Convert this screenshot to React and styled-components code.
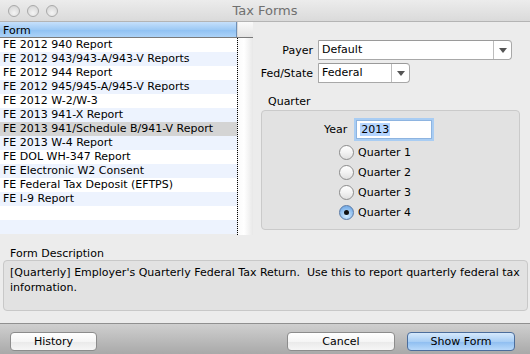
import React from "react"
import styled, { createGlobalStyle } from "styled-components"

const GlobalStyle = createGlobalStyle`
  html, body { margin: 0; padding: 0; }
  body {
    width: 530px;
    height: 354px;
    overflow: hidden;
    font-family: "DejaVu Sans", "Noto Sans", sans-serif;
    font-size: 11px;
    color: #000;
  }
`

const forms = [
  "FE 2012 940 Report",
  "FE 2012 943/943-A/943-V Reports",
  "FE 2012 944 Report",
  "FE 2012 945/945-A/945-V Reports",
  "FE 2012 W-2/W-3",
  "FE 2013 941-X Report",
  "FE 2013 941/Schedule B/941-V Report",
  "FE 2013 W-4 Report",
  "FE DOL WH-347 Report",
  "FE Electronic W2 Consent",
  "FE Federal Tax Deposit (EFTPS)",
  "FE I-9 Report",
  "",
  "",
]

const Window = styled.div`
  width: 530px;
  height: 354px;
  display: flex;
  flex-direction: column;
  background: #ececec;
`

const TitleBar = styled.div`
  height: 22px;
  flex: none;
  display: flex;
  align-items: center;
  position: relative;
  background: linear-gradient(#ececec, #dadada);
  border-bottom: 1px solid #b4b4b4;
  box-sizing: border-box;
`

const Lights = styled.div`
  display: flex;
  gap: 7px;
  padding-left: 8px;
`

const Light = styled.span`
  width: 12px;
  height: 12px;
  border-radius: 50%;
  box-sizing: border-box;
  border: 1px solid #a9a9a9;
  background: radial-gradient(circle at 50% 70%, #f4f4f4, #d0d0d0);
`

const Title = styled.div`
  position: absolute;
  left: 0;
  right: 0;
  text-align: center;
  font-size: 13px;
  color: #707070;
  pointer-events: none;
`

const Main = styled.div`
  height: 213px;
  flex: none;
  display: flex;
`

const ListPane = styled.div`
  width: 253px;
  flex: none;
  display: flex;
  flex-direction: column;
  overflow: hidden;
`

const HeaderRow = styled.div`
  height: 16px;
  flex: none;
  display: flex;
  border-bottom: 1px solid #7a7a7a;
  box-sizing: border-box;
`

const HeaderCell = styled.div`
  width: 237px;
  padding: 1px 0 0 3px;
  box-sizing: border-box;
  line-height: 15px;
  background: linear-gradient(#c6e0fb, #9ecaf5 50%, #8ec0f3 51%, #acd3f8);
  border-right: 1px solid #6e8fb6;
`

const HeaderCorner = styled.div`
  flex: 1;
  background: linear-gradient(#fafafa, #e4e4e4);
  border-left: 1px solid #d8d8d8;
`

const Body = styled.div`
  flex: 1;
  display: flex;
  overflow: hidden;
`

const Rows = styled.div`
  width: 238px;
  flex: none;
  border-right: 1px dotted #000;
  box-sizing: border-box;
`

const Row = styled.div`
  height: 14px;
  line-height: 14px;
  padding-left: 3px;
  white-space: nowrap;
  background: ${(p) => (p.$selected ? "#d4d4d4" : p.$odd ? "#edf3fe" : "#fff")};
`

const Track = styled.div`
  flex: 1;
  background: linear-gradient(90deg, #fafafa, #ffffff 40%, #e8e8e8);
`

const RightPane = styled.div`
  flex: 1;
  padding: 18px 10px 0 7px;
  display: flex;
  flex-direction: column;
`

const FieldGrid = styled.div`
  display: grid;
  grid-template-columns: 53px auto;
  column-gap: 5px;
  row-gap: 3px;
  align-items: center;
`

const Label = styled.div`
  text-align: right;
  white-space: nowrap;
`

const Select = styled.div`
  width: ${(p) => p.$w}px;
  height: 20px;
  display: flex;
  box-sizing: border-box;
  background: #fff;
  border: 1px solid #a8a8a8;
  border-top-color: #9a9a9a;
  border-radius: 0 4px 4px 0;
`

const SelectText = styled.div`
  flex: 1;
  padding-left: 3px;
  line-height: 18px;
`

const Arrow = styled.div`
  width: 17px;
  border-left: 1px solid #bdbdbd;
  display: flex;
  align-items: center;
  justify-content: center;
  &::after {
    content: "";
    border-left: 4px solid transparent;
    border-right: 4px solid transparent;
    border-top: 5px solid #555;
  }
`

const GroupTitle = styled.div`
  margin: 12px 0 0 8px;
  line-height: 13px;
`

const Group = styled.div`
  margin: 2px 0 0 1px;
  height: 120px;
  box-sizing: border-box;
  background: #e2e2e2;
  border: 1px solid #cacaca;
  border-radius: 4px;
  padding: 9px 0 0 62px;
`

const YearRow = styled.div`
  display: flex;
  align-items: center;
  gap: 9px;
  margin-bottom: 5px;
`

const YearInput = styled.div`
  width: 76px;
  height: 19px;
  box-sizing: border-box;
  background: #fff;
  border: 1px solid #8eb4e0;
  box-shadow: 0 0 0 2px #a9cdf3;
  padding: 2px 0 0 3px;
`

const Highlight = styled.span`
  background: #b5d5ff;
  padding: 0 1px;
`

const Radios = styled.div`
  display: flex;
  flex-direction: column;
  gap: 4px;
  padding-left: 15px;
`

const RadioRow = styled.div`
  display: flex;
  align-items: center;
  gap: 4px;
  height: 16px;
`

const RadioDot = styled.span`
  width: 15px;
  height: 15px;
  border-radius: 50%;
  box-sizing: border-box;
  border: 1px solid ${(p) => (p.$on ? "#5a7aa6" : "#8c8c8c")};
  background: ${(p) =>
    p.$on
      ? "radial-gradient(circle at 50% 75%, #d3ecff, #7fb3ea 70%, #6ea3de)"
      : "linear-gradient(#ffffff, #f2f2f2 50%, #e0e0e0)"};
  display: flex;
  align-items: center;
  justify-content: center;
  &::after {
    content: "";
    display: ${(p) => (p.$on ? "block" : "none")};
    width: 5px;
    height: 5px;
    border-radius: 50%;
    background: #111;
  }
`

const DescTitle = styled.div`
  margin: 12px 0 0 10px;
  line-height: 13px;
`

const DescBox = styled.div`
  margin: 0 2px 0 3px;
  height: 51px;
  box-sizing: border-box;
  background: #e2e2e2;
  border: 1px solid #c8c8c8;
  border-radius: 4px;
  padding: 4px 6px 3px;
  line-height: 15px;
`

const BottomBar = styled.div`
  margin-top: 12px;
  flex: 1;
  display: flex;
  align-items: flex-start;
  padding: 8px 15px 0 10px;
  gap: 12px;
  border-top: 1px solid #909090;
  background: linear-gradient(#cfcfcf, #a9a9a9);
`

const Button = styled.div`
  width: ${(p) => p.$w}px;
  height: 19px;
  box-sizing: border-box;
  border-radius: 4px;
  border: 1px solid ${(p) => (p.$primary ? "#4b6d9c" : "#8c8c8c")};
  background: ${(p) =>
    p.$primary
      ? "linear-gradient(#d6e9fc, #a8cef5 50%, #8dbdf0 51%, #b8d9fa)"
      : "linear-gradient(#ffffff, #f5f5f5 50%, #e9e9e9 51%, #f6f6f6)"};
  text-align: center;
  line-height: 17px;
  font-size: 11px;
  margin-left: ${(p) => (p.$push ? "auto" : "0")};
`

export default function App() {
  return (
    <>
      <GlobalStyle />
      <Window>
        <TitleBar>
          <Lights>
            <Light />
            <Light />
            <Light />
          </Lights>
          <Title>Tax Forms</Title>
        </TitleBar>
        <Main>
          <ListPane>
            <HeaderRow>
              <HeaderCell>Form</HeaderCell>
              <HeaderCorner />
            </HeaderRow>
            <Body>
              <Rows>
                {forms.map((f, i) => (
                  <Row key={i} $odd={i % 2 === 1} $selected={i === 6}>
                    {f}
                  </Row>
                ))}
              </Rows>
              <Track />
            </Body>
          </ListPane>
          <RightPane>
            <FieldGrid>
              <Label>Payer</Label>
              <Select $w={194}>
                <SelectText>Default</SelectText>
                <Arrow />
              </Select>
              <Label>Fed/State</Label>
              <Select $w={92}>
                <SelectText>Federal</SelectText>
                <Arrow />
              </Select>
            </FieldGrid>
            <GroupTitle>Quarter</GroupTitle>
            <Group>
              <YearRow>
                <span>Year</span>
                <YearInput>
                  <Highlight>2013</Highlight>
                </YearInput>
              </YearRow>
              <Radios>
                {[1, 2, 3, 4].map((q) => (
                  <RadioRow key={q}>
                    <RadioDot $on={q === 4} />
                    <span>Quarter {q}</span>
                  </RadioRow>
                ))}
              </Radios>
            </Group>
          </RightPane>
        </Main>
        <DescTitle>Form Description</DescTitle>
        <DescBox>
          [Quarterly] Employer's Quarterly Federal Tax Return.&nbsp; Use this to report quarterly federal tax
          information.
        </DescBox>
        <BottomBar>
          <Button $w={87}>History</Button>
          <Button $w={108} $push>
            Cancel
          </Button>
          <Button $w={108} $primary>
            Show Form
          </Button>
        </BottomBar>
      </Window>
    </>
  )
}
